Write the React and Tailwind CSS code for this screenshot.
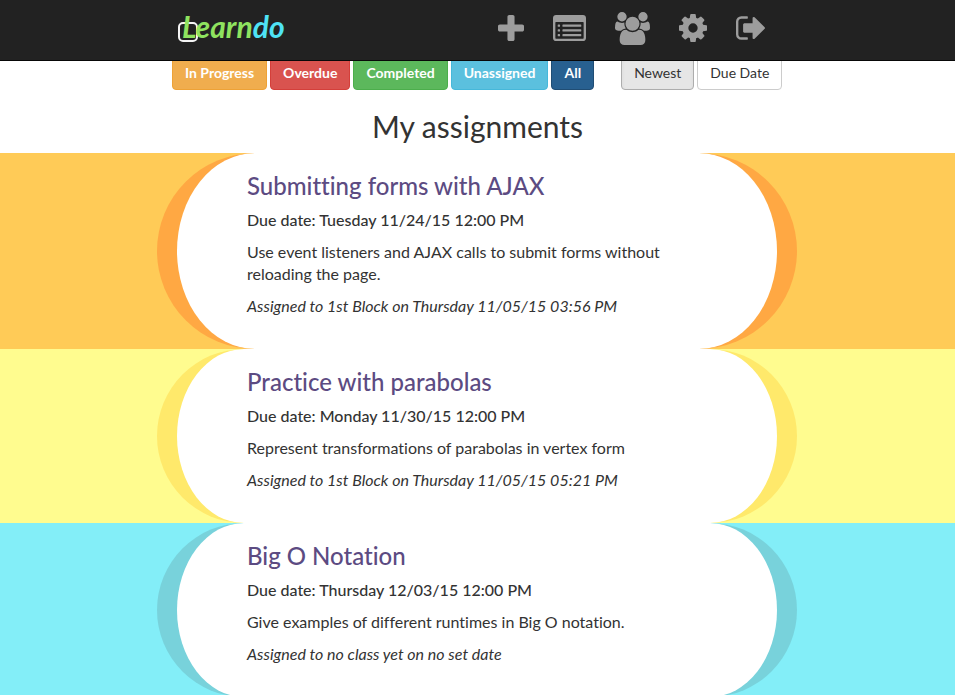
const assignments = [
  {
    title: "Submitting forms with AJAX",
    due: "Due date: Tuesday 11/24/15 12:00 PM",
    text: "Use event listeners and AJAX calls to submit forms without reloading the page.",
    assigned: "Assigned to 1st Block on Thursday 11/05/15 03:56 PM",
    band: "bg-[#ffcb57]",
    edge: "border-[#ffa843]",
  },
  {
    title: "Practice with parabolas",
    due: "Due date: Monday 11/30/15 12:00 PM",
    text: "Represent transformations of parabolas in vertex form",
    assigned: "Assigned to 1st Block on Thursday 11/05/15 05:21 PM",
    band: "bg-[#fffc8f]",
    edge: "border-[#ffe96b]",
  },
  {
    title: "Big O Notation",
    due: "Due date: Thursday 12/03/15 12:00 PM",
    text: "Give examples of different runtimes in Big O notation.",
    assigned: "Assigned to no class yet on no set date",
    band: "bg-[#83eef8]",
    edge: "border-[#78d2db]",
  },
];

const statusFilters = [
  { label: "In Progress", style: "bg-[#f0ad4e] border-[#eea236]" },
  { label: "Overdue", style: "bg-[#d9534f] border-[#d43f3a]" },
  { label: "Completed", style: "bg-[#5cb85c] border-[#4cae4c]" },
  { label: "Unassigned", style: "bg-[#5bc0de] border-[#46b8da]" },
  { label: "All", style: "bg-[#286090] border-[#204d74]" },
];

const navItems = [
  {
    label: "New assignment",
    size: "w-[26px] h-[26px]",
    viewBox: "192 128 1408 1408",
    path: "M1600 736v192q0 40-28 68t-68 28h-416v416q0 40-28 68t-68 28h-192q-40 0-68-28t-28-68v-416h-416q-40 0-68-28t-28-68v-192q0-40 28-68t68-28h416v-416q0-40 28-68t68-28h192q40 0 68 28t28 68v416h416q40 0 68 28t28 68z",
  },
  {
    label: "Assignments",
    size: "w-[33px] h-[26px]",
    viewBox: "0 256 1792 1408",
    path: "M160 256h1472q66 0 113 47t47 113v1088q0 66-47 113t-113 47h-1472q-66 0-113-47t-47-113v-1088q0-66 47-113t113-47zM160 640q-32 0-32 32v832q0 32 32 32h1472q32 0 32-32v-832q0-32-32-32zM288 768h64q32 0 32 32v64q0 32-32 32h-64q-32 0-32-32v-64q0-32 32-32zM288 1024h64q32 0 32 32v64q0 32-32 32h-64q-32 0-32-32v-64q0-32 32-32zM288 1280h64q32 0 32 32v64q0 32-32 32h-64q-32 0-32-32v-64q0-32 32-32zM544 768h960q32 0 32 32v64q0 32-32 32h-960q-32 0-32-32v-64q0-32 32-32zM544 1024h960q32 0 32 32v64q0 32-32 32h-960q-32 0-32-32v-64q0-32 32-32zM544 1280h960q32 0 32 32v64q0 32-32 32h-960q-32 0-32-32v-64q0-32 32-32z",
  },
  {
    label: "Classes",
    size: "w-[35px] h-[33px]",
    viewBox: "-64 0 1920 1792",
    path: "M529 896q-162 5-265 128h-134q-82 0-138-40.5t-56-118.5q0-353 124-353 6 0 43.5 21t97.5 42.5 119 21.5q67 0 133-23-5 37-5 66 0 139 81 256zm1071 637q0 120-73 189.5t-194 69.5h-874q-121 0-194-69.5t-73-189.5q0-53 3.5-103.5t14-109 26.5-108.5 43-97.5 62-81 85.5-53.5 111.5-20q10 0 43 21.5t73 48 107 48 135 21.5 135-21.5 107-48 73-48 43-21.5q61 0 111.5 20t85.5 53.5 62 81 43 97.5 26.5 108.5 14 109 3.5 103.5zm-1024-1277q0 106-75 181t-181 75-181-75-75-181 75-181 181-75 181 75 75 181zm704 384q0 159-112.5 271.5t-271.5 112.5-271.5-112.5-112.5-271.5 112.5-271.5 271.5-112.5 271.5 112.5 112.5 271.5zm576 225q0 78-56 118.5t-138 40.5h-134q-103-123-265-128 81-117 81-256 0-29-5-66 66 23 133 23 59 0 119-21.5t97.5-42.5 43.5-21q124 0 124 353zm-128-609q0 106-75 181t-181 75-181-75-75-181 75-181 181-75 181 75 75 181z",
  },
  {
    label: "Settings",
    size: "w-[28px] h-[28px]",
    viewBox: "128 128 1536 1536",
    path: "M1152 896q0-106-75-181t-181-75-181 75-75 181 75 181 181 75 181-75 75-181zm512-109v222q0 12-8 23t-20 13l-185 28q-19 54-39 91 35 50 107 138 10 12 10 25t-9 23q-27 37-99 108t-94 71q-12 0-26-9l-138-108q-44 23-91 38-16 136-29 186-7 28-36 28h-222q-14 0-24.5-8.5t-11.5-21.5l-28-184q-49-16-90-37l-141 107q-10 9-25 9-14 0-25-11-126-114-165-168-7-10-7-23 0-12 8-23 15-21 51-66.5t54-70.5q-27-50-41-99l-183-27q-13-2-21-12.5t-8-23.5v-222q0-12 8-23t19-13l186-28q14-46 39-92-40-57-107-138-10-12-10-24 0-10 9-23 26-36 98.5-107.5t94.5-71.5q13 0 26 10l138 107q44-23 91-38 16-136 29-186 7-28 36-28h222q14 0 24.5 8.5t11.5 21.5l28 184q49 16 90 37l142-107q9-9 24-9 13 0 25 10 129 119 165 170 7 8 7 22 0 12-8 23-15 21-51 66.5t-54 70.5q26 50 41 98l183 28q13 2 21 12.5t8 23.5z",
  },
  {
    label: "Sign out",
    size: "w-[29px] h-[28px]",
    viewBox: "64 128 1568 1536",
    path: "M704 1440q0 4 1 20t.5 26.5-3 23.5-10 19.5-20.5 6.5h-320q-119 0-203.5-84.5t-84.5-203.5v-704q0-119 84.5-203.5t203.5-84.5h320q13 0 22.5 9.5t9.5 22.5q0 4 1 20t.5 26.5-3 23.5-10 19.5-20.5 6.5h-320q-66 0-113 47t-47 113v704q0 66 47 113t113 47h312l11.5 1 11.5 3 8 5.5 7 9 2 13.5zm928-544q0 26-19 45l-544 544q-19 19-45 19t-45-19-19-45v-288h-448q-26 0-45-19t-19-45v-384q0-26 19-45t45-19h448v-288q0-26 19-45t45-19 45 19l544 544q19 19 19 45z",
  },
];

function Logo() {
  return (
    <svg className="h-[44px] w-[120px]" viewBox="0 0 120 44" role="img" aria-label="Learndo">
      <rect x="2" y="17" width="18" height="18" rx="4" fill="none" stroke="#f4f4f4" strokeWidth="2" />
      <text x="5" y="32" className="font-['Lato',sans-serif] text-[30px] font-bold italic">
        <tspan fill="#8fe35f">Learn</tspan>
        <tspan fill="#4fe3f5">do</tspan>
      </text>
    </svg>
  );
}

function Header() {
  return (
    <header className="fixed inset-x-0 top-0 z-10 border-b border-[#080808] bg-[#222222] pr-px">
      <div className="mx-auto flex h-[60px] max-w-[640px] items-center justify-between pr-8 pl-5">
        <a href="#home" className="-mt-1">
          <Logo />
        </a>
        <nav className="flex items-center gap-[29px] text-[#9d9d9d]">
          {navItems.map((item) => (
            <a key={item.label} href="#nav" aria-label={item.label} className="-mt-1">
              <svg
                className={item.size}
                viewBox={item.viewBox}
                preserveAspectRatio="none"
                fill="currentColor"
                fillRule="evenodd"
              >
                <path d={item.path} />
              </svg>
            </a>
          ))}
        </nav>
      </div>
    </header>
  );
}

function Filters() {
  return (
    <div className="pr-px">
      <div className="mx-auto flex max-w-[640px] flex-wrap gap-[27px] pl-[15px] text-sm leading-5">
        <div className="flex gap-[3px]">
          {statusFilters.map((f) => (
            <button key={f.label} type="button" className={`rounded border px-3 py-1.5 font-bold text-white ${f.style}`}>
              {f.label}
            </button>
          ))}
        </div>
        <div className="flex gap-[3px]">
          <button type="button" className="rounded border border-[#adadad] bg-[#e6e6e6] px-3 py-1.5 shadow-inner">
            Newest
          </button>
          <button type="button" className="rounded border border-[#cccccc] bg-white px-3 py-1.5">
            Due Date
          </button>
        </div>
      </div>
    </div>
  );
}

function Assignment({ item }) {
  return (
    <section className={`pr-px ${item.band}`}>
      <article
        className={`mx-auto max-w-[640px] rounded-[100px] border-x-[20px] bg-white px-[70px] pt-5 pb-8 ${item.edge}`}
      >
        <h2 className="text-2xl leading-[26px] font-medium text-[#5c4b82]">
          <a href="#assignment">{item.title}</a>
        </h2>
        <p className="mt-2.5 font-medium">{item.due}</p>
        <p className="mt-2.5">{item.text}</p>
        <p className="mt-2.5 italic">{item.assigned}</p>
      </article>
    </section>
  );
}

export default function App() {
  return (
    <div className="bg-white font-['Lato',sans-serif] text-base leading-[22px] text-[#333333] [font-variant-ligatures:none]">
      <Header />
      <main className="pt-14">
        <Filters />
        <h1 className="mt-5 mb-2.5 text-center text-[30px] leading-[33px]">My assignments</h1>
        {assignments.map((item) => (
          <Assignment key={item.title} item={item} />
        ))}
      </main>
    </div>
  );
}
